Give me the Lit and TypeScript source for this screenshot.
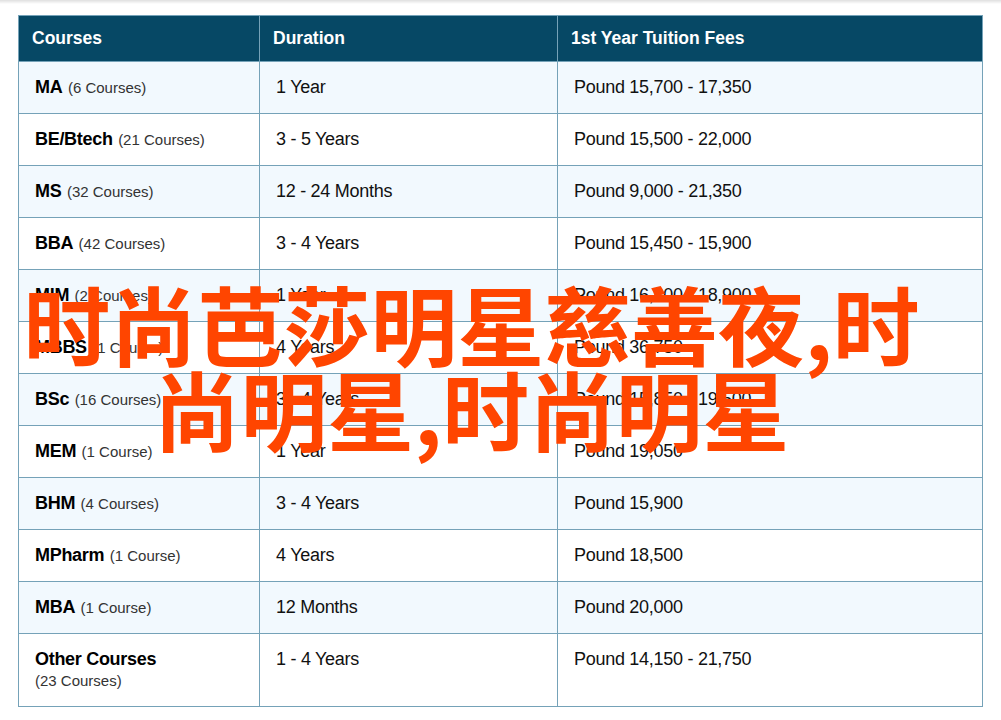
import { LitElement, html, css } from "lit";
import { customElement } from "lit/decorators.js";

const rows: [string, string, string, string][] = [
  ["MA", "(6 Courses)", "1 Year", "Pound 15,700 - 17,350"],
  ["BE/Btech", "(21 Courses)", "3 - 5 Years", "Pound 15,500 - 22,000"],
  ["MS", "(32 Courses)", "12 - 24 Months", "Pound 9,000 - 21,350"],
  ["BBA", "(42 Courses)", "3 - 4 Years", "Pound 15,450 - 15,900"],
  ["MIM", "(2 Courses)", "1 Year", "Pound 16,300 - 18,900"],
  ["MBBS", "(1 Course)", "4 Years", "Pound 36,750"],
  ["BSc", "(16 Courses)", "3 - 4 Years", "Pound 15,850 - 19,500"],
  ["MEM", "(1 Course)", "1 Year", "Pound 19,050"],
  ["BHM", "(4 Courses)", "3 - 4 Years", "Pound 15,900"],
  ["MPharm", "(1 Course)", "4 Years", "Pound 18,500"],
  ["MBA", "(1 Course)", "12 Months", "Pound 20,000"],
];

@customElement("app-root")
export class AppRoot extends LitElement {
  static styles = css`
    :host {
      display: block;
      position: relative;
      height: 720px;
      overflow: hidden;
      background: #fff;
      font-family: "Liberation Sans", Arial, sans-serif;
      color: #111;
    }
    .topshade {
      height: 4px;
      background: linear-gradient(#dfdfdf, #fff);
    }
    .wrap {
      padding: 11px 18px 0;
    }
    table {
      border-collapse: collapse;
      table-layout: fixed;
      width: 965px;
      font-size: 18px;
      letter-spacing: -0.28px;
    }
    th, td {
      border: 1px solid #75a2b8;
      text-align: left;
      box-sizing: border-box;
    }
    th {
      background: #064865;
      color: #fff;
      font-weight: 700;
      height: 46px;
      padding: 0 13px;
      font-size: 17.5px;
      letter-spacing: 0;
    }
    td {
      height: 52px;
      padding: 0 16px;
      vertical-align: middle;
    }
    tbody tr:nth-child(odd) td { background: #f2f9fe; }
    td.top { vertical-align: top; padding-top: 15px; }
    td.first-top { vertical-align: top; padding-top: 14px; }
    .c1 { width: 241px; }
    .c2 { width: 298px; }
    .name { font-weight: 700; color: #000; margin-right: 5.5px; letter-spacing: -0.3px; }
    .sub { font-size: 15px; color: #333; letter-spacing: 0; }
    .block { display: block; line-height: 22px; }
    .other td { height: 73px; }
    .overlay {
      position: absolute;
      left: 0;
      width: 903px;
      top: 280px;
      margin: 0;
      padding: 0 20px;
      text-align: center;
      color: #ff4500;
      font-family: "Noto Sans CJK SC", sans-serif;
      font-size: 86.8px;
      font-weight: 700;
      line-height: 85px;
    }
  `;

  render() {
    return html`
      <div class="topshade"></div>
      <div class="wrap">
        <table>
          <colgroup><col class="c1" /><col class="c2" /><col /></colgroup>
          <thead>
            <tr><th>Courses</th><th>Duration</th><th>1st Year Tuition Fees</th></tr>
          </thead>
          <tbody>
            ${rows.map(
              (r) => html`<tr>
                <td><span class="name">${r[0]}</span><span class="sub">${r[1]}</span></td>
                <td>${r[2]}</td>
                <td>${r[3]}</td>
              </tr>`
            )}
            <tr class="other">
              <td class="first-top"><span class="name block">Other Courses</span><span class="sub block">(23 Courses)</span></td>
              <td class="top">1 - 4 Years</td>
              <td class="top">Pound 14,150 - 21,750</td>
            </tr>
          </tbody>
        </table>
      </div>
      <h1 class="overlay">时尚芭莎明星慈善夜,时尚明星,时尚明星</h1>
    `;
  }
}
